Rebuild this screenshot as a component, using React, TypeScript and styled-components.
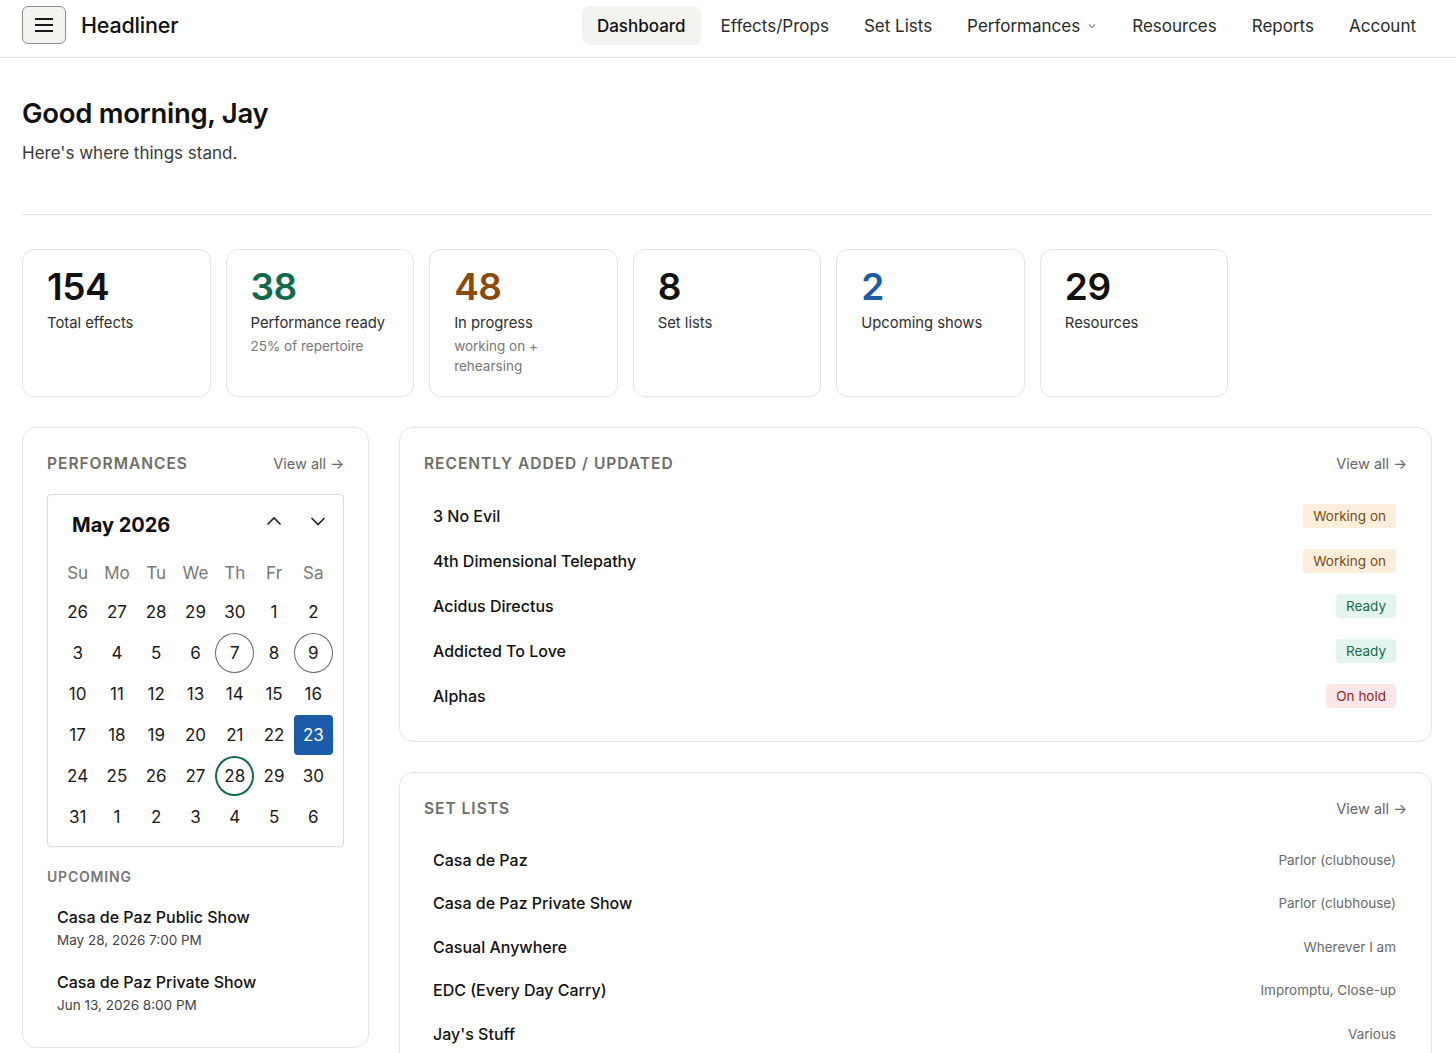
import React from "react";
import styled, { createGlobalStyle } from "styled-components";

const GlobalStyle = createGlobalStyle`
  * {
    box-sizing: border-box;
  }
  body {
    margin: 0;
    background: #fff;
    color: #111;
    font-family: Inter, "Noto Sans", "Liberation Sans", sans-serif;
  }
`;

const TopBar = styled.header`
  height: 58px;
  border-bottom: 1px solid #e2e2e0;
  display: flex;
  align-items: flex-start;
  justify-content: space-between;
  padding: 6px 25px 0 22px;
`;

const Brand = styled.div`
  display: flex;
  align-items: center;
  gap: 15px;
  height: 38px;
  font-size: 21.5px;
  font-weight: 500;
  letter-spacing: -0.2px;
`;

const MenuButton = styled.button`
  width: 44px;
  height: 38px;
  border: 1px solid #8d8d88;
  border-radius: 6px;
  background: #f3f3f0;
  display: flex;
  align-items: center;
  justify-content: center;
  padding: 0;
`;

const Nav = styled.nav`
  display: flex;
  align-items: center;
  gap: 5px;
`;

const NavItem = styled.a<{ $active?: boolean }>`
  display: flex;
  align-items: center;
  gap: 7px;
  height: 39px;
  padding: 0 15px;
  border-radius: 8px;
  font-size: 17px;
  font-weight: ${(p) => (p.$active ? 500 : 400)};
  color: ${(p) => (p.$active ? "#111" : "#2a2a2a")};
  background: ${(p) => (p.$active ? "#f3f3f0" : "transparent")};
  text-decoration: none;
`;

const Main = styled.main`
  padding: 0 24px 0 22px;
`;

const Greeting = styled.section`
  padding: 38px 0 51px;
  border-bottom: 1px solid #e2e2e0;
  h1 {
    margin: 0 0 13px;
    font-size: 27.5px;
    font-weight: 600;
    letter-spacing: -0.3px;
  }
  p {
    margin: 0;
    font-size: 17px;
    color: #3a3a3a;
  }
`;

const Stats = styled.div`
  display: grid;
  grid-template-columns: repeat(7, 1fr);
  gap: 15px;
  margin: 34px 0 30px;
`;

const StatCard = styled.div`
  height: 148px;
  border: 1px solid #e4e4e2;
  border-radius: 12px;
  padding: 15px 24px;
`;

const StatValue = styled.div<{ $color?: string }>`
  font-size: 37px;
  font-weight: 600;
  line-height: 44px;
  letter-spacing: -0.5px;
  color: ${(p) => p.$color || "#111"};
`;

const StatLabel = styled.div`
  margin-top: 5px;
  font-size: 14.8px;
  color: #2e2e2e;
`;

const StatNote = styled.div`
  margin-top: 4px;
  font-size: 13.5px;
  line-height: 20px;
  color: #777;
`;

const Columns = styled.div`
  display: grid;
  grid-template-columns: 347px 1fr;
  gap: 30px;
  align-items: start;
`;

const Stack = styled.div`
  display: flex;
  flex-direction: column;
  gap: 30px;
`;

const Panel = styled.section<{ $bottom?: number }>`
  border: 1px solid #e4e4e2;
  border-radius: 14px;
  padding: 24px 24px ${(p) => p.$bottom ?? 23}px;
`;

const PanelHead = styled.div<{ $gap?: number }>`
  display: flex;
  justify-content: space-between;
  align-items: center;
  height: 22px;
  margin-bottom: ${(p) => p.$gap ?? 19}px;
`;

const PanelTitle = styled.h2`
  margin: 0;
  font-size: 15.5px;
  font-weight: 600;
  letter-spacing: 1px;
  text-transform: uppercase;
  color: #6e6e68;
`;

const ViewAll = styled.a`
  font-size: 14.5px;
  color: #666;
  text-decoration: none;
`;

const Calendar = styled.div`
  border: 1px solid #dcdcda;
  border-radius: 4px;
  box-shadow: 0 1px 2px rgba(0, 0, 0, 0.05);
  padding: 14px 10px 9px;
`;

const CalHead = styled.div`
  display: flex;
  align-items: center;
  justify-content: space-between;
  padding-left: 14px;
  height: 32px;
  margin-bottom: 13px;
  strong {
    font-size: 20px;
    font-weight: 700;
  }
`;

const CalArrows = styled.div`
  display: flex;
  gap: 12px;
  margin: 0 -1px 8px 0;
`;

const ArrowButton = styled.button`
  width: 32px;
  height: 32px;
  border: none;
  background: none;
  padding: 0;
  display: flex;
  align-items: center;
  justify-content: center;
`;

const DayGrid = styled.div`
  display: grid;
  grid-template-columns: repeat(7, minmax(0, 1fr));
  grid-template-rows: 37px repeat(6, 41px);
  align-items: center;
  justify-items: center;
`;

const WeekDay = styled.span`
  font-size: 17px;
  color: #777;
`;

const Day = styled.span<{ $mark?: "event" | "show" | "today" }>`
  width: 39px;
  height: 40px;
  flex-shrink: 0;
  display: flex;
  align-items: center;
  justify-content: center;
  font-size: 17px;
  color: ${(p) => (p.$mark === "today" ? "#fff" : "#1a1a1a")};
  border-radius: ${(p) => (p.$mark === "today" ? "4px" : "50%")};
  background: ${(p) => (p.$mark === "today" ? "#1c5ba8" : "transparent")};
  border: ${(p) =>
    p.$mark === "event"
      ? "1.5px solid #6a6a66"
      : p.$mark === "show"
      ? "2px solid #10694c"
      : "none"};
`;

const SubTitle = styled.h3`
  margin: 21px 0 12px;
  font-size: 14px;
  font-weight: 600;
  letter-spacing: 0.8px;
  color: #777;
`;

const ShowItem = styled.div`
  padding: 8px 10px 11px;
  div {
    font-size: 16px;
    font-weight: 500;
    line-height: 24px;
  }
  span {
    display: block;
    font-size: 13.5px;
    color: #444;
    line-height: 22px;
  }
`;

const Row = styled.div<{ $h: number }>`
  display: flex;
  justify-content: space-between;
  align-items: center;
  height: ${(p) => p.$h}px;
  padding: 0 11px 0 9px;
  font-size: 16px;
  font-weight: 500;
`;

const Badge = styled.span<{ $tone: "working" | "ready" | "hold" }>`
  font-size: 13.5px;
  font-weight: 400;
  line-height: 16px;
  padding: 4px 10px;
  border-radius: 4px;
  background: ${(p) =>
    p.$tone === "working" ? "#fbefdc" : p.$tone === "ready" ? "#e3f4ed" : "#fbe7e7"};
  color: ${(p) =>
    p.$tone === "working" ? "#7b4a12" : p.$tone === "ready" ? "#1a6a4d" : "#9a1c22"};
`;

const Meta = styled.span`
  font-size: 13.5px;
  font-weight: 400;
  color: #6a6a6a;
`;

const Chevron = ({ up }: { up?: boolean }) => (
  <svg width="18" height="18" viewBox="0 0 18 18" fill="none" stroke="#222" strokeWidth="1.6">
    <path d={up ? "M2.5 12.5 L9 6 L15.5 12.5" : "M2.5 6 L9 12.5 L15.5 6"} />
  </svg>
);

const stats = [
  { value: "154", label: "Total effects" },
  { value: "38", label: "Performance ready", note: "25% of repertoire", color: "#0f6a4d" },
  { value: "48", label: "In progress", note: "working on + rehearsing", color: "#8a4a0c" },
  { value: "8", label: "Set lists" },
  { value: "2", label: "Upcoming shows", color: "#1c5ba8" },
  { value: "29", label: "Resources" },
];

const weekDays = ["Su", "Mo", "Tu", "We", "Th", "Fr", "Sa"];
const days = [
  26, 27, 28, 29, 30, 1, 2, 3, 4, 5, 6, 7, 8, 9, 10, 11, 12, 13, 14, 15, 16, 17, 18, 19, 20, 21,
  22, 23, 24, 25, 26, 27, 28, 29, 30, 31, 1, 2, 3, 4, 5, 6,
];
const marks: Record<number, "event" | "show" | "today"> = {
  11: "event",
  13: "event",
  27: "today",
  32: "show",
};

const recent: { name: string; status: string; tone: "working" | "ready" | "hold" }[] = [
  { name: "3 No Evil", status: "Working on", tone: "working" },
  { name: "4th Dimensional Telepathy", status: "Working on", tone: "working" },
  { name: "Acidus Directus", status: "Ready", tone: "ready" },
  { name: "Addicted To Love", status: "Ready", tone: "ready" },
  { name: "Alphas", status: "On hold", tone: "hold" },
];

const setLists = [
  { name: "Casa de Paz", venue: "Parlor (clubhouse)" },
  { name: "Casa de Paz Private Show", venue: "Parlor (clubhouse)" },
  { name: "Casual Anywhere", venue: "Wherever I am" },
  { name: "EDC (Every Day Carry)", venue: "Impromptu, Close-up" },
  { name: "Jay's Stuff", venue: "Various" },
];

const App: React.FC = () => (
  <>
    <GlobalStyle />
    <TopBar>
      <Brand>
        <MenuButton type="button" aria-label="Menu">
          <svg width="20" height="16" viewBox="0 0 20 16" stroke="#1a1a1a" strokeWidth="2">
            <path d="M1 2h18M1 8h18M1 14h18" />
          </svg>
        </MenuButton>
        Headliner
      </Brand>
      <Nav>
        <NavItem $active>Dashboard</NavItem>
        <NavItem>Effects/Props</NavItem>
        <NavItem>Set Lists</NavItem>
        <NavItem>
          Performances
          <svg width="10" height="10" viewBox="0 0 10 10" fill="none" stroke="#888" strokeWidth="1.2">
            <path d="M2 3.5 L5 6.5 L8 3.5" />
          </svg>
        </NavItem>
        <NavItem>Resources</NavItem>
        <NavItem>Reports</NavItem>
        <NavItem>Account</NavItem>
      </Nav>
    </TopBar>
    <Main>
      <Greeting>
        <h1>Good morning, Jay</h1>
        <p>Here's where things stand.</p>
      </Greeting>

      <Stats>
        {stats.map((s) => (
          <StatCard key={s.label}>
            <StatValue $color={s.color}>{s.value}</StatValue>
            <StatLabel>{s.label}</StatLabel>
            {s.note ? <StatNote>{s.note}</StatNote> : null}
          </StatCard>
        ))}
      </Stats>

      <Columns>
        <Panel $bottom={20}>
          <PanelHead $gap={20}>
            <PanelTitle>Performances</PanelTitle>
            <ViewAll>View all →</ViewAll>
          </PanelHead>
          <Calendar>
            <CalHead>
              <strong>May 2026</strong>
              <CalArrows>
                <ArrowButton type="button" aria-label="Previous month">
                  <Chevron up />
                </ArrowButton>
                <ArrowButton type="button" aria-label="Next month">
                  <Chevron />
                </ArrowButton>
              </CalArrows>
            </CalHead>
            <DayGrid>
              {weekDays.map((d) => (
                <WeekDay key={d}>{d}</WeekDay>
              ))}
              {days.map((d, i) => (
                <Day key={i} $mark={marks[i]}>
                  {d}
                </Day>
              ))}
            </DayGrid>
          </Calendar>
          <SubTitle>UPCOMING</SubTitle>
          <ShowItem>
            <div>Casa de Paz Public Show</div>
            <span>May 28, 2026 7:00 PM</span>
          </ShowItem>
          <ShowItem>
            <div>Casa de Paz Private Show</div>
            <span>Jun 13, 2026 8:00 PM</span>
          </ShowItem>
        </Panel>

        <Stack>
          <Panel>
            <PanelHead>
              <PanelTitle>Recently added / updated</PanelTitle>
              <ViewAll>View all →</ViewAll>
            </PanelHead>
            {recent.map((r) => (
              <Row key={r.name} $h={45}>
                {r.name}
                <Badge $tone={r.tone}>{r.status}</Badge>
              </Row>
            ))}
          </Panel>
          <Panel>
            <PanelHead>
              <PanelTitle>Set lists</PanelTitle>
              <ViewAll>View all →</ViewAll>
            </PanelHead>
            {setLists.map((s) => (
              <Row key={s.name} $h={43.5}>
                {s.name}
                <Meta>{s.venue}</Meta>
              </Row>
            ))}
          </Panel>
        </Stack>
      </Columns>
    </Main>
  </>
);

export default App;
